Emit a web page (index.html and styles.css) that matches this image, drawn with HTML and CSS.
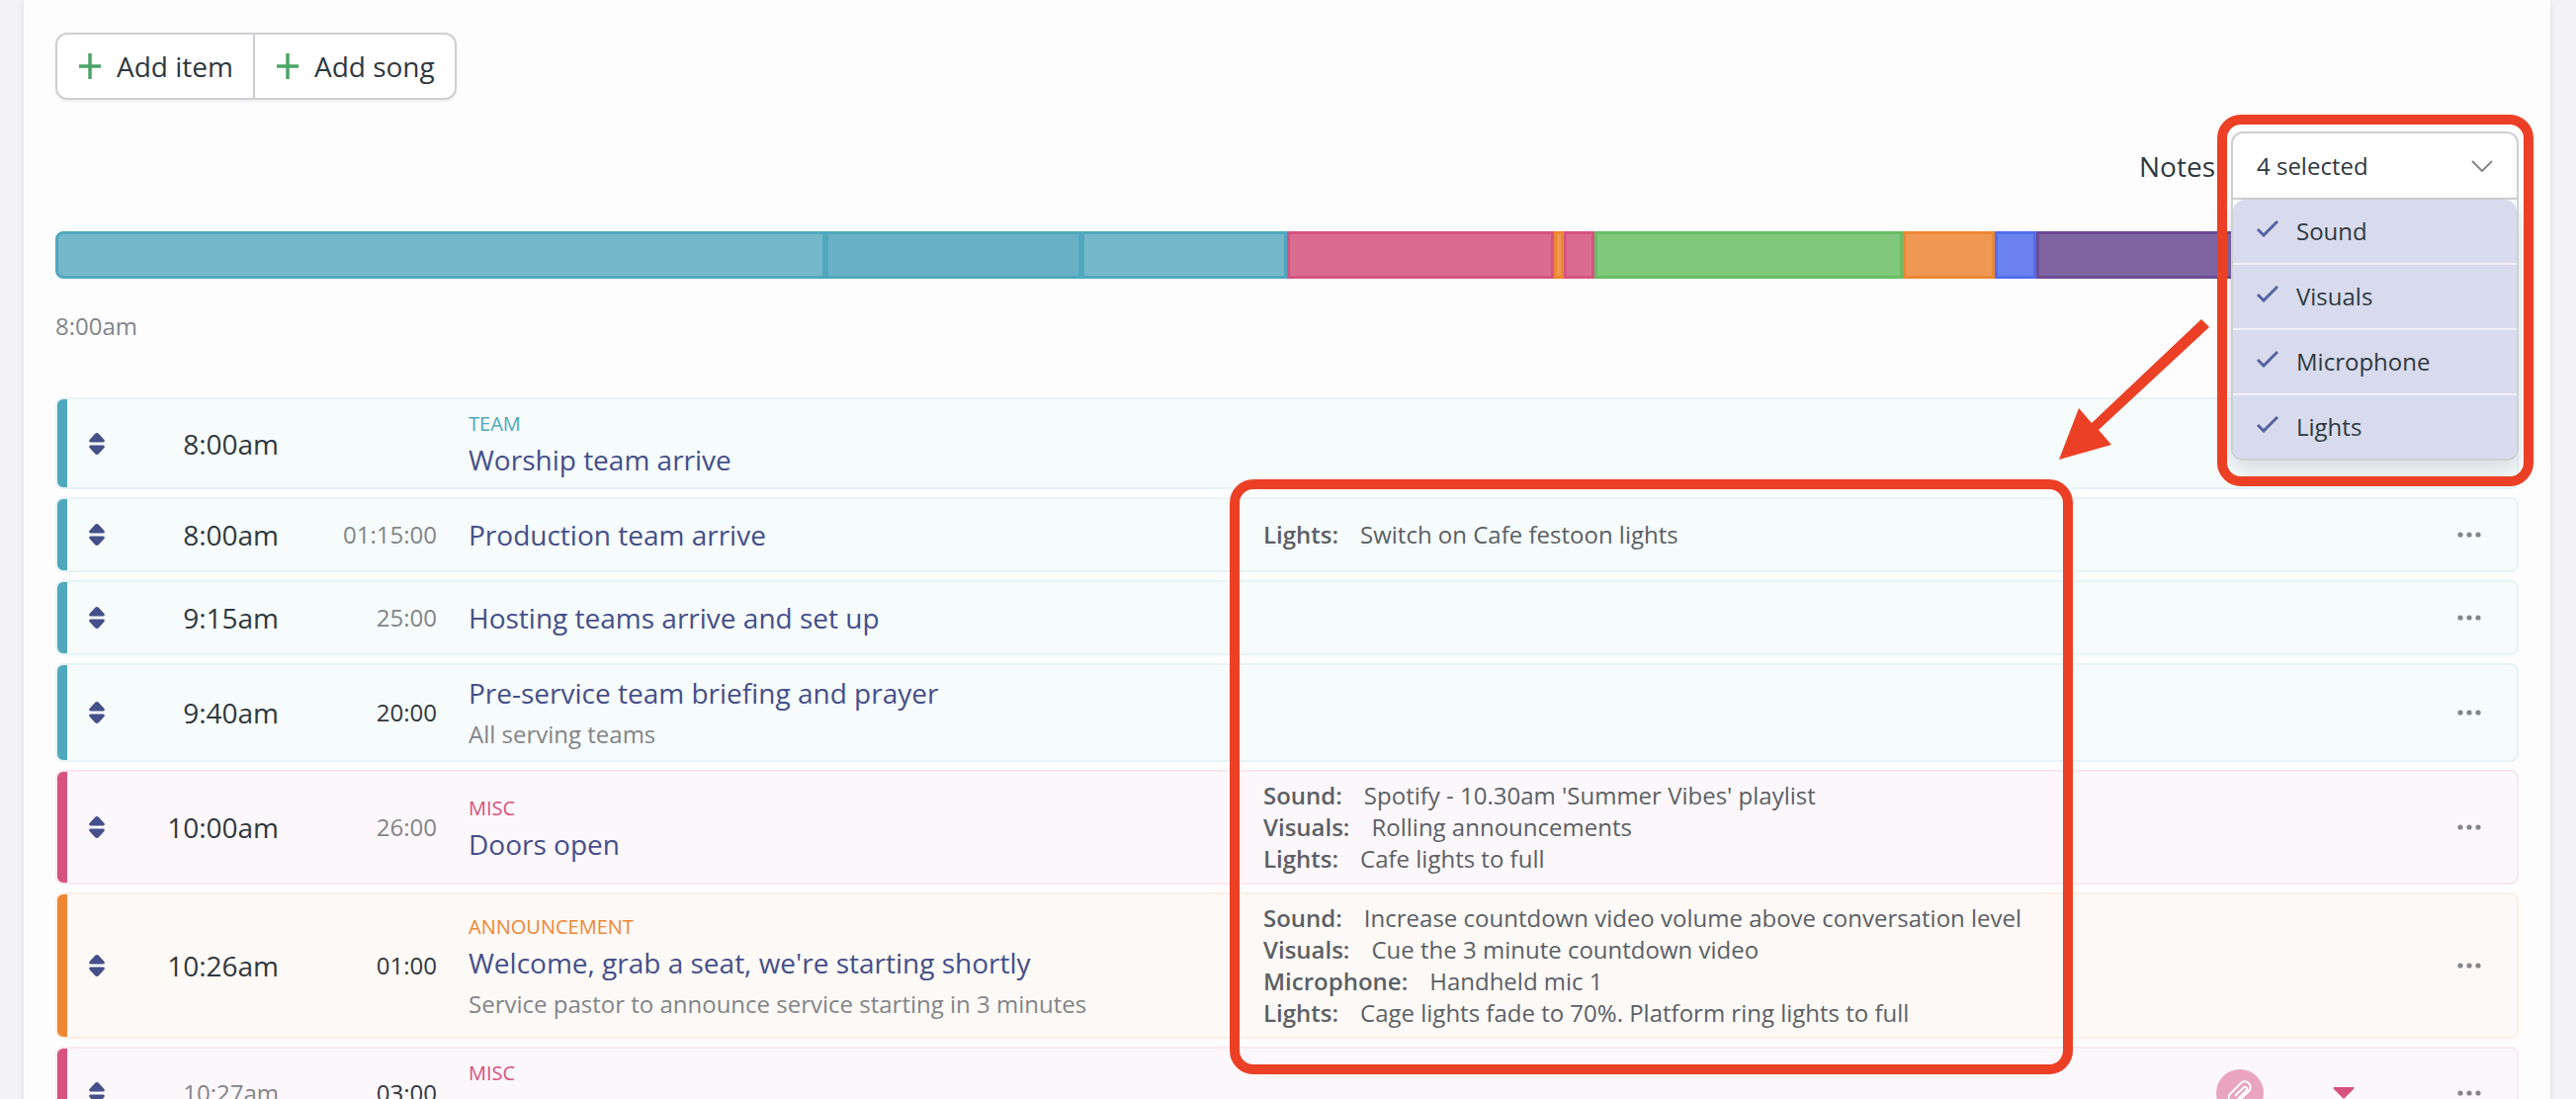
FILE: index.html
```
<!DOCTYPE html>
<html lang="en">
<head>
  <meta charset="UTF-8">
  <meta name="viewport" content="width=device-width, initial-scale=1.0">
  <title>Service plan</title>
  <link rel="stylesheet" href="styles.css">
</head>
<body>
  <!-- Shared icons -->
  <svg class="icon-defs" aria-hidden="true">
    <symbol id="icon-plus" viewBox="0 0 22 26"><path d="M11 0v26M0 13h22" fill="none" stroke="currentColor" stroke-width="3.5"/></symbol>
    <symbol id="icon-sort" viewBox="0 0 16 22"><path d="M8 0q1 0 2 1l5.500 6q1 2-1 2.500h-13Q-.500 9 .500 7L6 1q1-1 2-1zM8 22q1 0 2-1l5.500-6q1-2-1-2.500h-13q-2 .500-1 2.500L6 21q1 1 2 1z" fill="currentColor"/></symbol>
    <symbol id="icon-check" viewBox="0 0 22 18"><path d="M1 10l6 6L21 2" fill="none" stroke="currentColor" stroke-width="3"/></symbol>
    <symbol id="icon-dots" viewBox="0 0 24 6"><circle cx="3" cy="3" r="2.6"/><circle cx="12" cy="3" r="2.6"/><circle cx="21" cy="3" r="2.6"/></symbol>
  </svg>

  <main class="card">
    <div class="button-group">
      <button type="button"><svg class="icon-plus"><use href="#icon-plus"/></svg>Add item</button>
      <button type="button"><svg class="icon-plus"><use href="#icon-plus"/></svg>Add song</button>
    </div>

    <!-- Notes filter -->
    <div class="notes-filter">
      <span id="notes-label">Notes</span>
      <div class="dropdown">
        <button type="button" class="dropdown-toggle" aria-expanded="true" aria-describedby="notes-label">
          4 selected
          <svg class="chevron" viewBox="0 0 22 12"><path d="M1 1l10 10L21 1" fill="none" stroke="currentColor" stroke-width="2"/></svg>
        </button>
        <div class="dropdown-menu">
          <label><input type="checkbox" checked><svg class="icon-check"><use href="#icon-check"/></svg>Sound</label>
          <label><input type="checkbox" checked><svg class="icon-check"><use href="#icon-check"/></svg>Visuals</label>
          <label><input type="checkbox" checked><svg class="icon-check"><use href="#icon-check"/></svg>Microphone</label>
          <label><input type="checkbox" checked><svg class="icon-check"><use href="#icon-check"/></svg>Lights</label>
        </div>
        <div class="highlight highlight-menu"></div>
      </div>
    </div>

    <!-- Timeline, one segment per item, width is its share of 240 minutes -->
    <div class="timeline">
      <div class="segment team" style="width: 31.25%"></div>
      <div class="segment team active" style="width: 10.42%"></div>
      <div class="segment team" style="width: 8.33%"></div>
      <div class="segment misc" style="width: 10.83%"></div>
      <div class="segment announcement" style="width: 0.42%"></div>
      <div class="segment misc" style="width: 1.25%"></div>
      <div class="segment worship" style="width: 12.5%"></div>
      <div class="segment announcement" style="width: 3.75%"></div>
      <div class="segment video" style="width: 1.67%"></div>
      <div class="segment talk" style="width: 19.58%"></div>
    </div>
    <div class="timeline-start">8:00am</div>

    <!-- Running order -->
    <div class="items">
      <div class="item team">
        <svg class="grip"><use href="#icon-sort"/></svg>
        <div class="time">8:00am</div>
        <div class="duration"></div>
        <div class="details">
          <div class="category">TEAM</div>
          <a href="#" class="title">Worship team arrive</a>
        </div>
        <div class="notes"></div>
        <div class="extras"></div>
        <button type="button" class="more" aria-label="More"><svg><use href="#icon-dots"/></svg></button>
      </div>

      <div class="item team">
        <svg class="grip"><use href="#icon-sort"/></svg>
        <div class="time">8:00am</div>
        <div class="duration muted">01:15:00</div>
        <div class="details">
          <a href="#" class="title">Production team arrive</a>
        </div>
        <div class="notes">
          <div><b>Lights:</b>Switch on Cafe festoon lights</div>
        </div>
        <div class="extras"></div>
        <button type="button" class="more" aria-label="More"><svg><use href="#icon-dots"/></svg></button>
      </div>

      <div class="item team">
        <svg class="grip"><use href="#icon-sort"/></svg>
        <div class="time">9:15am</div>
        <div class="duration muted">25:00</div>
        <div class="details">
          <a href="#" class="title">Hosting teams arrive and set up</a>
        </div>
        <div class="notes"></div>
        <div class="extras"></div>
        <button type="button" class="more" aria-label="More"><svg><use href="#icon-dots"/></svg></button>
      </div>

      <div class="item team">
        <svg class="grip"><use href="#icon-sort"/></svg>
        <div class="time">9:40am</div>
        <div class="duration">20:00</div>
        <div class="details">
          <a href="#" class="title">Pre-service team briefing and prayer</a>
          <div class="description">All serving teams</div>
        </div>
        <div class="notes"></div>
        <div class="extras"></div>
        <button type="button" class="more" aria-label="More"><svg><use href="#icon-dots"/></svg></button>
      </div>

      <div class="item misc">
        <svg class="grip"><use href="#icon-sort"/></svg>
        <div class="time">10:00am</div>
        <div class="duration muted">26:00</div>
        <div class="details">
          <div class="category">MISC</div>
          <a href="#" class="title">Doors open</a>
        </div>
        <div class="notes">
          <div><b>Sound:</b>Spotify - 10.30am 'Summer Vibes' playlist</div>
          <div><b>Visuals:</b>Rolling announcements</div>
          <div><b>Lights:</b>Cafe lights to full</div>
        </div>
        <div class="extras"></div>
        <button type="button" class="more" aria-label="More"><svg><use href="#icon-dots"/></svg></button>
      </div>

      <div class="item announcement">
        <svg class="grip"><use href="#icon-sort"/></svg>
        <div class="time">10:26am</div>
        <div class="duration">01:00</div>
        <div class="details">
          <div class="category">ANNOUNCEMENT</div>
          <a href="#" class="title">Welcome, grab a seat, we're starting shortly</a>
          <div class="description">Service pastor to announce service starting in 3 minutes</div>
        </div>
        <div class="notes">
          <div><b>Sound:</b>Increase countdown video volume above conversation level</div>
          <div><b>Visuals:</b>Cue the 3 minute countdown video</div>
          <div><b>Microphone:</b>Handheld mic 1</div>
          <div><b>Lights:</b>Cage lights fade to 70%. Platform ring lights to full</div>
        </div>
        <div class="extras"></div>
        <button type="button" class="more" aria-label="More"><svg><use href="#icon-dots"/></svg></button>
      </div>

      <div class="item misc">
        <svg class="grip"><use href="#icon-sort"/></svg>
        <div class="time small muted">10:27am</div>
        <div class="duration">03:00</div>
        <div class="details">
          <div class="category">MISC</div>
          <a href="#" class="title">3 minute countdown</a>
        </div>
        <div class="notes"></div>
        <div class="extras">
          <button type="button" class="attachment" aria-label="Attachments">
            <svg viewBox="0 0 24 28"><path d="M10 23L21 12a5.500 5.500 0 0 0-8-8L2 15a5 5 0 0 0 0 7M7 17l9-9a2.200 2.200 0 0 1 3 3L9 21" fill="none" stroke="currentColor" stroke-width="2"/></svg>
          </button>
          <button type="button" class="expand" aria-label="Expand">
            <svg viewBox="0 0 22 12"><path d="M1 0h20q1 1 0 2l-9 9q-1 1-2 0L1 2Q0 1 1 0z" fill="currentColor"/></svg>
          </button>
        </div>
        <button type="button" class="more" aria-label="More"><svg><use href="#icon-dots"/></svg></button>
      </div>

      <div class="highlight highlight-notes"></div>
      <svg class="arrow" viewBox="0 0 152 143"><path d="M0 142L20 90l13 15L144 0l8 8L40 112l13 15z" fill="#eb4025"/></svg>
    </div>
  </main>
</body>
</html>
```
FILE: styles.css
```
* {
  box-sizing: border-box;
}

body {
  margin: 0;
  background-color: #f3f3f5;
  color: #2f3840;
  font-family: "Open Sans", sans-serif;
  font-size: 28px;
  line-height: 40px;
  overflow: hidden;
}

button {
  font: inherit;
  color: inherit;
  background: none;
  border: none;
  padding: 0;
  cursor: pointer;
}

.icon-defs {
  display: none;
}

.card {
  margin: 0 26px 0 24px;
  padding: 33px 32px;
  background-color: #fdfdfe;
  box-shadow: 0 0 6px rgba(60, 50, 90, 0.12);
}

/* Buttons */
.button-group {
  display: inline-flex;
  border: 2px solid #cfcfd3;
  border-radius: 12px;
  background-color: #ffffff;
  box-shadow: 0 2px 3px rgba(0, 0, 0, 0.06);
}

.button-group button {
  display: flex;
  align-items: center;
  gap: 16px;
  height: 64px;
  padding: 0 20px 0 22px;
}

.button-group button + button {
  border-left: 2px solid #cfcfd3;
}

.icon-plus {
  width: 22px;
  height: 26px;
  color: #4ba567;
}

/* Notes filter */
.notes-filter {
  display: flex;
  justify-content: flex-end;
  align-items: center;
  gap: 16px;
  margin-top: 32px;
}

.dropdown {
  position: relative;
  z-index: 2;
  width: 291px;
  font-size: 24px;
}

.dropdown-toggle {
  display: flex;
  justify-content: space-between;
  align-items: center;
  width: 100%;
  height: 69px;
  padding: 0 24px;
  border: 2px solid #cfcfd3;
  border-radius: 12px 12px 0 0;
  background-color: #ffffff;
}

.chevron {
  width: 22px;
  height: 12px;
  color: #85878c;
}

.dropdown-menu {
  position: absolute;
  top: 69px;
  left: 0;
  right: 0;
  border: 2px solid #cfcfd3;
  border-top: none;
  border-radius: 0 0 12px 12px;
  background-color: #ffffff;
  box-shadow: 0 10px 20px rgba(40, 60, 80, 0.15);
}

.dropdown-menu label {
  display: flex;
  align-items: center;
  gap: 18px;
  height: 66px;
  padding: 0 24px;
  border-bottom: 2px solid #f1f1f6;
  background-color: #d8dbed;
}

.dropdown-menu label:first-child {
  border-radius: 12px 12px 0 0;
}

.dropdown-menu label:last-child {
  height: 64px;
  border-bottom: none;
  border-radius: 0 0 10px 10px;
}

.dropdown-menu input {
  position: absolute;
  opacity: 0;
}

.icon-check {
  width: 22px;
  height: 18px;
  margin-bottom: 6px;
  color: #56629f;
}

/* Timeline */
.timeline {
  display: flex;
  height: 48px;
  margin-top: 32px;
}

.segment {
  border: 3px solid;
}

.segment:first-child {
  border-radius: 8px 0 0 8px;
}

.segment:last-child {
  border-radius: 0 8px 8px 0;
}

.segment.team {
  border-color: #4fa8bd;
  background-color: #75b8cb;
}

.segment.active {
  background-color: #68b1c7;
}

.segment.misc {
  border-color: #d6537f;
  background-color: #db6c91;
}

.segment.announcement {
  border-color: #ed8733;
  background-color: #ef9854;
}

.segment.worship {
  border-color: #69bd65;
  background-color: #7fc87c;
}

.segment.video {
  border-color: #516eec;
  background-color: #6b82ef;
}

.segment.talk {
  border-color: #6b4c94;
  background-color: #7e65a2;
}

.timeline-start {
  margin-top: 28px;
  color: #828589;
  font-size: 24px;
}

/* Running order */
.items {
  position: relative;
  display: flex;
  flex-direction: column;
  gap: 8px;
  margin-top: 52px;
}

.item {
  display: grid;
  grid-template-columns: 16px 144px 128px 772px 1fr 212px 24px;
  column-gap: 32px;
  align-items: center;
  min-height: 76px;
  padding: 8px 36px 8px 32px;
  border: 2px solid;
  border-radius: 8px;
  background-repeat: no-repeat;
  background-size: 10px 100%;
}

.item.team {
  border-color: #e6f3f6;
  background-color: #f6fbfb;
  background-image: linear-gradient(#4fa8bd, #4fa8bd);
}

.item.misc {
  border-color: #f9e8f0;
  background-color: #fcf7fb;
  background-image: linear-gradient(#d6537f, #d6537f);
}

.item.announcement {
  border-color: #fdeee3;
  background-color: #fdf9f6;
  background-image: linear-gradient(#ed8733, #ed8733);
}

.grip {
  width: 16px;
  height: 22px;
  color: #454f8a;
}

.time,
.duration {
  text-align: right;
}

.duration,
.small {
  font-size: 24px;
}

.muted {
  color: #828589;
}

.category {
  font-size: 20px;
  line-height: 33px;
}

.team .category {
  color: #4fa8bd;
}

.misc .category {
  color: #d6537f;
}

.announcement .category {
  color: #ed8733;
}

.title {
  display: block;
  color: #454f8a;
  text-decoration: none;
}

.description {
  margin-top: 4px;
  color: #828589;
  font-size: 24px;
  line-height: 36px;
}

.notes {
  color: #5b6066;
  font-size: 24px;
  line-height: 32px;
}

.notes b {
  margin-right: 22px;
  font-weight: 600;
}

.extras {
  display: flex;
  align-items: center;
  gap: 70px;
}

.attachment {
  width: 48px;
  height: 48px;
  border-radius: 50%;
  background-color: #e8a5bd;
  color: #ffffff;
}

.attachment svg {
  display: block;
  width: 24px;
  height: 28px;
  margin: 0 auto;
}

.expand {
  color: #d6537f;
}

.expand svg {
  display: block;
  width: 22px;
  height: 12px;
}

.more svg {
  display: block;
  width: 24px;
  height: 6px;
  fill: #828589;
}

/* Callouts drawn over the page */
.highlight {
  position: absolute;
  border: 10px solid #eb4025;
  border-radius: 24px;
  pointer-events: none;
}

.highlight-menu {
  top: -17px;
  left: -14px;
  right: -15px;
  height: 376px;
}

.highlight-notes {
  top: 83px;
  left: 1188px;
  width: 853px;
  height: 602px;
}

.arrow {
  position: absolute;
  top: -79px;
  left: 2027px;
  width: 152px;
  height: 143px;
}
```
